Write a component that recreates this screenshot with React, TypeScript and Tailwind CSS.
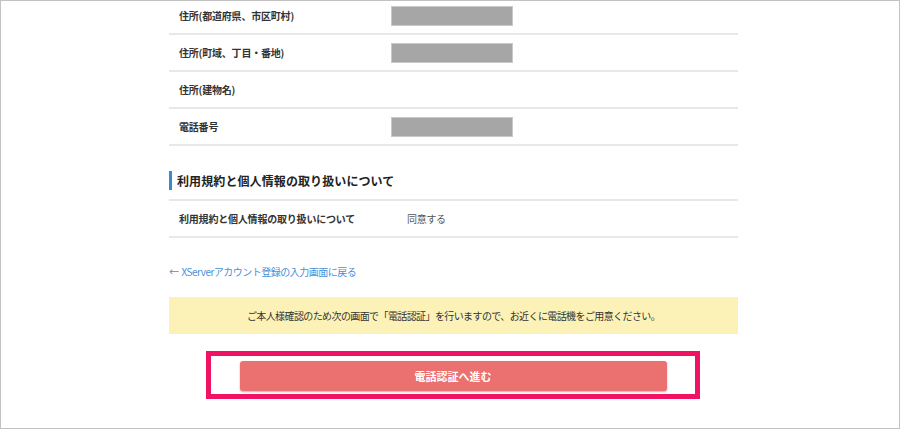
import React from "react";

interface Row {
    label: string;
    masked?: boolean;
    value?: string;
}

const addressRows: Row[] = [
    { label: "住所(都道府県、市区町村)", masked: true },
    { label: "住所(町域、丁目・番地)", masked: true },
    { label: "住所(建物名)" },
    { label: "電話番号", masked: true },
];

const font = {
    fontFamily: '"Noto Sans CJK JP", "Noto Sans", sans-serif',
};

const FieldRow: React.FC<{ row: Row }> = ({ row }) => (
    <div className="flex h-[37px] items-center border-b-2 border-[#e8e8e8]">
        <div className="w-[222px] shrink-0 pl-[10px] text-[10px] font-bold tracking-[-0.2px] text-[#333]">
            {row.label}
        </div>
        {row.masked && (
            <div className="h-[20px] w-[122px] border border-[#c9c9c9] bg-[#a6a6a6]" />
        )}
        {row.value && (
            <div className="pl-[16px] text-[10px] tracking-[-0.3px] text-[#555]">
                {row.value}
            </div>
        )}
    </div>
);

export default function App() {
    return (
        <div
            className="h-[429px] w-[900px] overflow-hidden border border-[#c2c2c2] bg-white"
            style={font}
        >
            <div className="ml-[168px] -mt-[3px] w-[569px]">
                {addressRows.map((row) => (
                    <FieldRow key={row.label} row={row} />
                ))}

                <div className="mt-[25px] mb-[9px] flex h-[19px] items-center">
                    <div className="h-[19px] w-[3px] bg-[#3b88d4]" />
                    <h2 className="pl-[5px] text-[12px] font-bold tracking-[0.1px] text-[#222]">
                        利用規約と個人情報の取り扱いについて
                    </h2>
                </div>
                <div className="border-t-2 border-[#e8e8e8]">
                    <FieldRow
                        row={{
                            label: "利用規約と個人情報の取り扱いについて",
                            value: "同意する",
                        }}
                    />
                </div>

                <div className="mt-[26px] text-[10px] leading-[16px] tracking-[-0.5px] text-[#4a90d9]">
                    <span className="mr-[3px]">←</span>XServerアカウント登録の入力画面に戻る
                </div>

                <div className="mt-[17px] flex h-[37px] items-center justify-center bg-[#fcf2b8] text-[10px] tracking-[-0.6px] text-[#333]">
                    ご本人様確認のため次の画面で「電話認証」を行いますので、お近くに電話機をご用意ください。
                </div>

                <div className="mt-[17px] ml-[37px] flex h-[48px] w-[494px] items-start justify-center border-[5px] border-[#f01363] pt-[5px]">
                    <button className="flex h-[30px] w-[427px] items-center justify-center rounded-[3px] bg-[#eb7070] text-[11px] font-bold text-white shadow-[0_1px_2px_rgba(0,0,0,0.3)]">
                        電話認証へ進む
                    </button>
                </div>
            </div>
        </div>
    );
}
